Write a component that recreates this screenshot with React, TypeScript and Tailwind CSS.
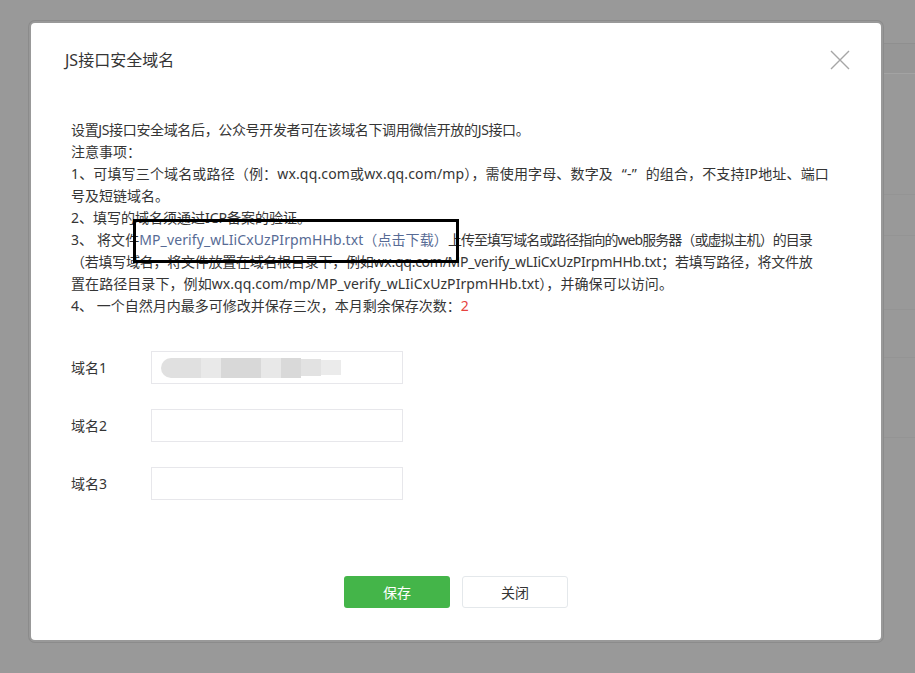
const font = { fontFamily: '"Noto Sans", "Noto Sans CJK SC", sans-serif' };

const Field = ({ label, blurred }: { label: string; blurred?: boolean }) => (
  <div className="flex items-center">
    <div className="w-[80px] text-[14px] text-[#353535]">{label}</div>
    <div className="flex h-[33px] w-[252px] items-center border border-[#e7e7eb] bg-white px-[9px]">
      {blurred && (
        <div className="flex h-[20px] items-center">
          <div className="h-[20px] w-[40px] rounded-l-[10px] bg-[#e0e0e0]" />
          <div className="h-[20px] w-[20px] bg-[#e9e9e9]" />
          <div className="h-[20px] w-[40px] bg-[#d8d8d8]" />
          <div className="h-[20px] w-[20px] bg-[#e8e8e8]" />
          <div className="h-[20px] w-[20px] bg-[#d9d9d9]" />
          <div className="h-[17px] w-[20px] bg-[#e2e2e2]" />
          <div className="h-[15px] w-[20px] bg-[#ebebeb]" />
        </div>
      )}
    </div>
  </div>
);

export default function App() {
  return (
    <div className="relative h-[673px] w-[915px] overflow-hidden bg-[#999999]" style={font}>
      {/* page behind the mask */}
      <div className="flex">
        <div className="w-[600px]" />
        <div className="flex flex-1 flex-col pt-[43px]">
          <div className="h-[30px] border-t border-[#8f8f8f] bg-[#969696]" />
          <div className="h-[121px] border-t border-[#a3a3a3]" />
          <div className="h-[41px] border-t border-[#949494]" />
          <div className="h-[74px] border-t border-[#949494]" />
          <div className="h-[48px] border-t border-[#949494]" />
          <div className="h-[80px] border-t border-[#949494]" />
          <div className="h-[80px] border-t border-[#949494]" />
        </div>
      </div>

      <div className="absolute left-[31px] top-[23px] h-[617px] w-[850px] rounded-[4px] bg-white shadow-[0_0_0_2px_#999999,0_0_0_3px_#8b8b8b]">
        <div className="flex items-center justify-between pl-[34px] pr-[31px] pt-[25px]">
          <h3 className="text-[16px] leading-[24px] text-[#353535]">JS接口安全域名</h3>
          <svg width="20" height="20" viewBox="0 0 20 20" className="mt-[-1px]">
            <path d="M1 1 L19 19 M19 1 L1 19" stroke="#a6a6a6" strokeWidth="1.4" fill="none" />
          </svg>
        </div>

        <div className="relative mt-[47px] px-[40px] text-[14px] leading-[22px] text-[#353535] [&>p]:whitespace-nowrap">
          <p className="tracking-[-0.35px]">设置JS接口安全域名后，公众号开发者可在该域名下调用微信开放的JS接口。</p>
          <p>注意事项：</p>
          <p className="tracking-[0.15px]">
            1、可填写三个域名或路径（例：wx.qq.com或wx.qq.com/mp），需使用字母、数字及
            <span className="inline-block w-[14px] text-right">{'\u201c'}</span>-<span className="inline-block w-[14px] text-left">{'\u201d'}</span>
            的组合，不支持IP地址、端口
          </p>
          <p>号及短链域名。</p>
          <p>2、填写的域名须通过ICP备案的验证。</p>
          <p className="tracking-[0.1px]">
            3、 将文件<a className="text-[#576b95]">MP_verify_wLIiCxUzPIrpmHHb.txt（点击下载）</a>
            <span className="tracking-[-0.95px]">上传至填写域名或路径指向的web服务器（或虚拟主机）的目录</span>
          </p>
          <p className="tracking-[-0.25px]">（若填写域名，将文件放置在域名根目录下，例如wx.qq.com/MP_verify_wLIiCxUzPIrpmHHb.txt；若填写路径，将文件放</p>
          <p className="tracking-[0.07px]">置在路径目录下，例如wx.qq.com/mp/MP_verify_wLIiCxUzPIrpmHHb.txt），并确保可以访问。</p>
          <p>
            4、 一个自然月内最多可修改并保存三次，本月剩余保存次数：<span className="text-[#e64340]">2</span>
          </p>

          {/* annotation frame drawn over the screenshot */}
          <div className="absolute left-[102px] top-[100px] h-[44px] w-[326px] border-[3px] border-black" />
        </div>

        <div className="mt-[34px] flex flex-col gap-[25px] px-[40px]">
          <Field label="域名1" blurred />
          <Field label="域名2" />
          <Field label="域名3" />
        </div>

        <div className="mt-[76px] flex justify-center gap-[12px]">
          <button className="h-[32px] w-[106px] rounded-[3px] bg-[#44b549] text-[14px] text-white">保存</button>
          <button className="h-[32px] w-[106px] rounded-[3px] border border-[#e4e8eb] bg-white text-[14px] text-[#353535]">关闭</button>
        </div>
      </div>
    </div>
  );
}
